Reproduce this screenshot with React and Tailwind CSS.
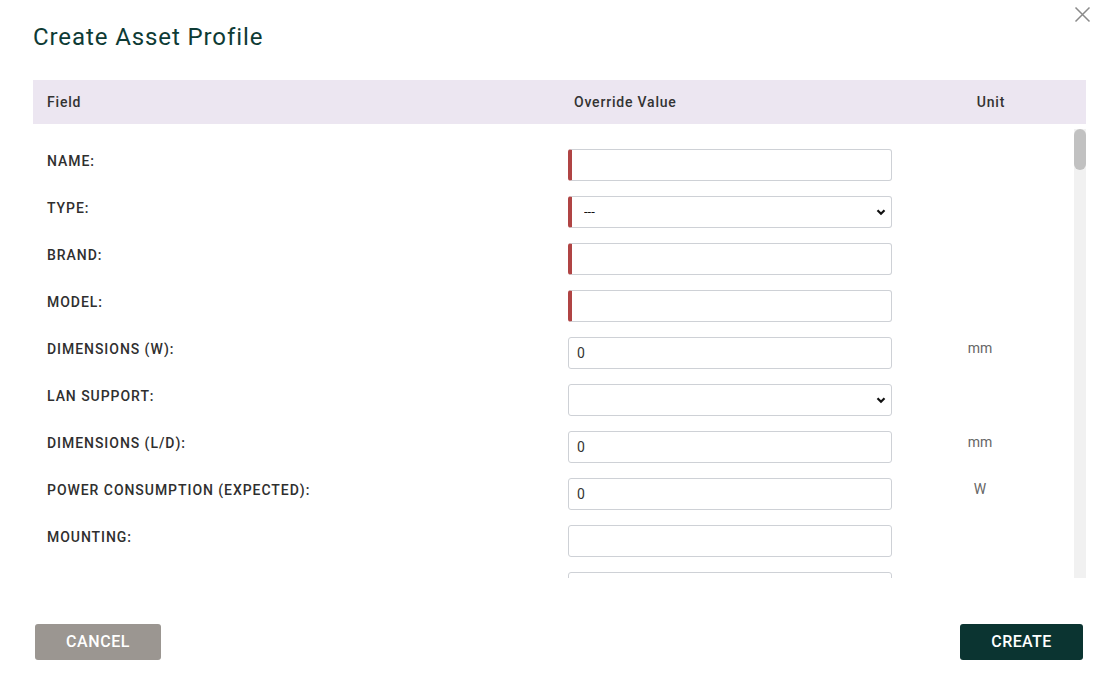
import React from 'react';

const fields = [
  { label: 'NAME:', kind: 'input', required: true, value: '' },
  { label: 'TYPE:', kind: 'select', required: true, value: '---' },
  { label: 'BRAND:', kind: 'input', required: true, value: '' },
  { label: 'MODEL:', kind: 'input', required: true, value: '' },
  { label: 'DIMENSIONS (W):', kind: 'input', value: '0', unit: 'mm' },
  { label: 'LAN SUPPORT:', kind: 'select', value: '' },
  { label: 'DIMENSIONS (L/D):', kind: 'input', value: '0', unit: 'mm' },
  { label: 'POWER CONSUMPTION (EXPECTED):', kind: 'input', value: '0', unit: 'W' },
  { label: 'MOUNTING:', kind: 'input', value: '' },
  { label: 'APPROVED FIRMWARE:', kind: 'input', value: '' },
];

function Chevron() {
  return (
    <svg width="10" height="10" viewBox="0 0 10 10" className="pointer-events-none absolute right-[6px] top-[11px]">
      <path d="M1.5 3.2 L5 6.7 L8.5 3.2" fill="none" stroke="#111" strokeWidth="2.2" />
    </svg>
  );
}

function Field({ f }) {
  const edge = f.required ? 'border-l-4 border-l-[#b04444]' : '';
  if (f.kind === 'select') {
    return (
      <div className="relative h-8">
        <select
          defaultValue={f.value}
          className={`h-8 w-full appearance-none rounded-[3px] border border-[#ced1d6] bg-white pl-3 text-[13px] text-[#111] outline-none ${edge}`}
        >
          <option value={f.value}>{f.value}</option>
        </select>
        <Chevron />
      </div>
    );
  }
  return (
    <input
      defaultValue={f.value}
      className={`h-8 w-full rounded-[3px] border border-[#ced1d6] bg-white pl-2 text-sm text-[#333] outline-none ${edge}`}
    />
  );
}

export default function App() {
  return (
    <div className="relative h-[689px] w-[1110px] overflow-hidden bg-white pl-[33px] pr-[24px] font-['Roboto','Liberation_Sans',sans-serif]">
      <button className="absolute right-[19px] top-[6px] p-0 text-[#8a8a8a]">
        <svg width="17" height="17" viewBox="0 0 17 17">
          <path d="M1.5 1.5 L15.5 15.5 M15.5 1.5 L1.5 15.5" stroke="currentColor" strokeWidth="1.5" fill="none" />
        </svg>
      </button>

      <h1 className="pt-[21px] text-[24px] font-normal leading-8 tracking-[0.9px] text-[#0e3b35]">Create Asset Profile</h1>

      <div className="mt-[27px] grid h-11 grid-cols-[535px_324px_1fr] items-center bg-[#ece6f1] text-sm font-medium tracking-[0.8px] text-[#333]">
        <div className="pl-[14px]">Field</div>
        <div className="pl-[6px]">Override Value</div>
        <div className="pl-[4px] text-center">Unit</div>
      </div>

      <div className="flex h-[454px]">
        <div className="flex flex-1 flex-col gap-[15px] overflow-hidden pt-[25px]">
          {fields.map((f) => (
            <div key={f.label} className="grid h-8 shrink-0 grid-cols-[535px_324px_1fr]">
              <div className="pl-[14px] pt-[2px] text-sm font-medium leading-5 tracking-[0.95px] text-[#2f2f2f]">{f.label}</div>
              <Field f={f} />
              <div className="pr-[6px] pt-[1px] text-center text-sm leading-5 text-[#666]">{f.unit}</div>
            </div>
          ))}
        </div>
        <div className="mt-[5px] w-3 bg-[#f1f1f1]">
          <div className="h-[41px] rounded-full bg-[#c1c1c1]" />
        </div>
      </div>

      <div className="mt-[46px] flex justify-between pl-[2px] pr-[3px]">
        <button className="h-9 w-[126px] rounded-[3px] bg-[#9b9691] text-base font-medium tracking-[0.6px] text-white">CANCEL</button>
        <button className="h-9 w-[123px] rounded-[3px] bg-[#0b3431] text-base font-medium tracking-[0.4px] text-white">CREATE</button>
      </div>
    </div>
  );
}
